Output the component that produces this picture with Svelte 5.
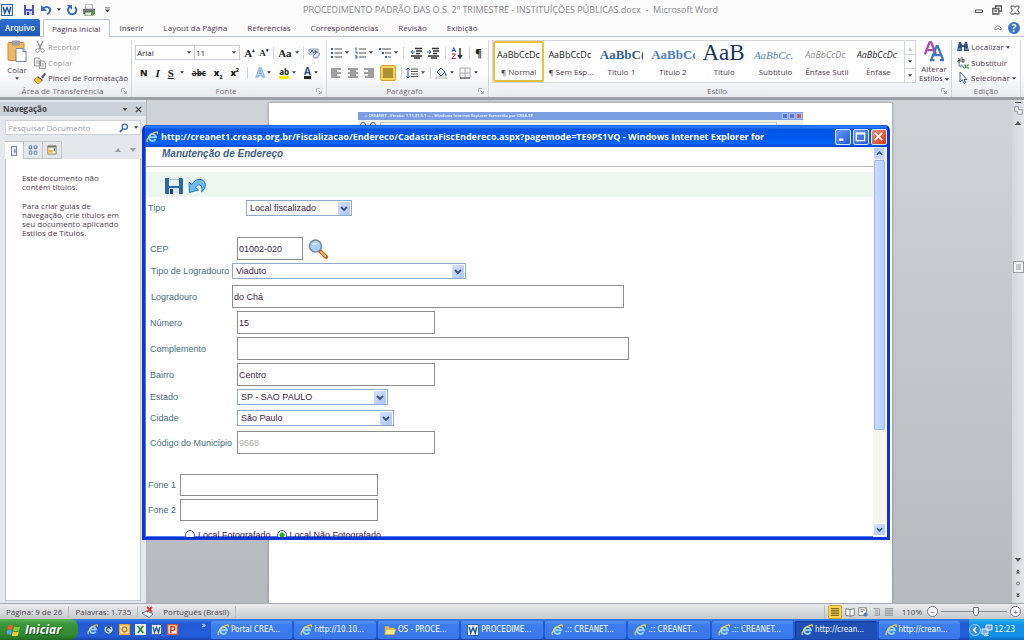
<script lang="ts">
	type Style = { name: string; sample: string; look: string };
	type Task = { icon: 'ie' | 'folder' | 'word'; text: string; active?: boolean };

	const tabs = [
		'Página Inicial',
		'Inserir',
		'Layout da Página',
		'Referências',
		'Correspondências',
		'Revisão',
		'Exibição'
	];
	let currentTab = $state('Página Inicial');

	const styles: Style[] = [
		{ name: '¶ Normal', sample: 'AaBbCcDc', look: 'plain' },
		{ name: '¶ Sem Esp...', sample: 'AaBbCcDc', look: 'plain' },
		{ name: 'Título 1', sample: 'AaBbC(', look: 'heading dark' },
		{ name: 'Título 2', sample: 'AaBbCc', look: 'heading' },
		{ name: 'Título', sample: 'AaB', look: 'title' },
		{ name: 'Subtítulo', sample: 'AaBbCc.', look: 'subtitle' },
		{ name: 'Ênfase Sutil', sample: 'AaBbCcDc', look: 'plain soft' },
		{ name: 'Ênfase', sample: 'AaBbCcDc', look: 'plain slanted' }
	];

	const tasks: Task[] = [
		{ icon: 'ie', text: 'Portal CREA...' },
		{ icon: 'ie', text: 'http://10.10...' },
		{ icon: 'folder', text: 'OS - PROCE...' },
		{ icon: 'word', text: 'PROCEDIME...' },
		{ icon: 'ie', text: '.:: CREANET...' },
		{ icon: 'ie', text: '.:: CREANET...' },
		{ icon: 'ie', text: '.:: CREANET...' },
		{ icon: 'ie', text: 'http://crean...', active: true },
		{ icon: 'ie', text: 'http://crean...' }
	];

	let address = $state({
		cep: '01002-020',
		street: 'do Chá',
		number: '15',
		extra: '',
		district: 'Centro',
		cityCode: '9668',
		phone1: '',
		phone2: ''
	});
	let photo = $state('nao');
</script>

{#snippet ie()}
	<svg class="ico" viewBox="0 0 16 16" aria-hidden="true">
		<path d="M12.6 11a4.600 4.600 0 1 1 .6-2.800H5.500" fill="none" stroke="#8fd4fb" stroke-width="2.600" />
		<path d="M2.200 14.800C-1 12 7 2 14.500 1.200c1.300.2 1 2 .3 3" fill="none" stroke="#f7cd3b" stroke-width="1.500" />
	</svg>
{/snippet}

{#snippet word()}
	<svg class="ico" viewBox="0 0 16 16" aria-hidden="true">
		<rect x=".7" y=".7" width="14.600" height="14.600" fill="#f2f7ff" stroke="#3467b2" stroke-width="1.400" />
		<path d="M3 4l2 8 3-7 3 7 2-8" fill="none" stroke="#2458ab" stroke-width="2" />
	</svg>
{/snippet}

{#snippet caret()}
	<svg class="caret" viewBox="0 0 5 3" aria-hidden="true"><path d="M0 0h5L2.500 3z" fill="currentColor" /></svg>
{/snippet}

{#snippet chevron()}
	<svg class="chev" viewBox="0 0 8 8" aria-hidden="true"><path d="M1 2.500l3 3 3-3" fill="none" stroke="#35507c" stroke-width="1.800" /></svg>
{/snippet}

{#snippet launcher()}
	<svg class="launcher" viewBox="0 0 6 6" aria-hidden="true"><path d="M.5 4V.5H4M2.500 2.500l3 3M5.500 3v2.500H3" fill="none" stroke="#a3a8af" stroke-width=".8" /></svg>
{/snippet}

{#snippet lines(kind: string)}
	<svg class="ico" viewBox="0 0 12 12" aria-hidden="true">
		{#if kind === 'left'}
			<path d="M1 2h10M1 4h6M1 6h10M1 8h6M1 10h9" stroke="#444" />
		{:else if kind === 'center'}
			<path d="M1 2h10M3 4h6M1 6h10M3 8h6M1 10h10" stroke="#444" />
		{:else if kind === 'right'}
			<path d="M1 2h10M5 4h6M1 6h10M5 8h6M2 10h9" stroke="#444" />
		{:else if kind === 'full'}
			<path d="M1 2h10M1 4h10M1 6h10M1 8h10M1 10h10" stroke="#5b4a10" />
		{:else if kind === 'bullets'}
			<path d="M4.500 2H12M4.500 6H12M4.500 10H12" stroke="#555" />
			<path d="M1 2h2M1 6h2M1 10h2" stroke="#2e5aa8" stroke-width="2" />
		{:else if kind === 'numbers'}
			<path d="M5 2h7M5 6h7M5 10h7" stroke="#555" />
			<path d="M2 .5v3M1 5h2v2M1 9h2v2H1" fill="none" stroke="#2e5aa8" />
		{:else if kind === 'levels'}
			<path d="M3 2h9M6 6h6M9 10h3" stroke="#555" />
			<path d="M0 2h2M3 6h2M6 10h2" stroke="#2e5aa8" stroke-width="2" />
		{:else if kind === 'outdent'}
			<path d="M5 1.500h7M6 4h6M6 6.500h4M1 9h11M4 11h6" stroke="#333" stroke-width="1.400" />
			<path d="M5 5H1M3 3L1 5l2 2" fill="none" stroke="#2e5aa8" />
		{:else if kind === 'indent'}
			<path d="M5 1.500h7M6 4h6M6 6.500h4M1 9h11M4 11h6" stroke="#333" stroke-width="1.400" />
			<path d="M0 5h4M2 3l2 2-2 2" fill="none" stroke="#2e5aa8" />
		{:else}
			<path d="M5 2h7M5 4.500h7M5 7h7M5 9.500h7" stroke="#555" />
			<path d="M2 1v10M.5 3L2 1l1.500 2M.5 9L2 11l1.500-2" fill="none" stroke="#2e5aa8" />
		{/if}
	</svg>
{/snippet}

<div class="desktop">
	<header class="titlebar">
		<div class="quick">
			{@render word()}
			<i class="sep"></i>
			<svg class="ico" viewBox="0 0 12 12" aria-hidden="true">
				<path d="M1 1h10v10H1z" fill="#5557b8" /><path d="M3 1h6v4H3z" fill="#eef" /><path d="M3 7h6v4H3z" fill="#c9cdf0" /><path d="M4 8h2v3H4z" fill="#33398e" />
			</svg>
			<svg class="ico" viewBox="0 0 12 12" aria-hidden="true">
				<path d="M3 4.500c4-3 8-1 7 2.500-.4 1.500-1.500 2.500-3 3.500" fill="none" stroke="#3b6cc4" stroke-width="2" /><path d="M1 1v6h6z" fill="#3b6cc4" />
			</svg>
			{@render caret()}
			<svg class="ico" viewBox="0 0 12 12" aria-hidden="true">
				<path d="M4 2.500A4.200 4.200 0 1 0 9 3" fill="none" stroke="#3b6cc4" stroke-width="2" /><path d="M1 1h5v5z" fill="#3b6cc4" />
			</svg>
			<svg class="ico" viewBox="0 0 12 12" aria-hidden="true">
				<path d="M3 0h6l1 5H2z" fill="#fff" stroke="#777" stroke-width=".7" /><path d="M0 5h12v5H0z" fill="#73777b" /><path d="M2 8h8v4H2z" fill="#dfe8d8" stroke="#555" stroke-width=".7" /><path d="M8 8l3-2v5H8z" fill="#5aa33a" />
			</svg>
			<i class="sep"></i>
			<svg class="custom" viewBox="0 0 6 6" aria-hidden="true"><path d="M0 0h6v1H0zM0 2.500h6L3 6z" fill="#444" /></svg>
		</div>
		<h1>PROCEDIMENTO PADRÃO DAS O.S. 2º TRIMESTRE - INSTITUÍÇÕES PÚBLICAS.docx&nbsp; -&nbsp; Microsoft Word</h1>
		<div class="win-buttons">
			<button type="button" aria-label="Minimizar">
				<svg viewBox="0 0 10 10"><path d="M1.500 5h7v2.500h-7z" fill="#fff" stroke="#555" /></svg>
			</button>
			<button type="button" aria-label="Restaurar">
				<svg viewBox="0 0 10 10"><path d="M3.500 3V1h6v5h-2M.8 3.500h6v5.500h-6zM2.500 6h2.500" fill="none" stroke="#555" stroke-width="1.300" /></svg>
			</button>
			<button type="button" aria-label="Fechar">
				<svg viewBox="0 0 10 10"><path d="M1 1h3l1 1.500L6 1h3v2L7.500 5 9 7v2H6L5 7.500 4 9H1V7l1.500-2L1 3z" fill="#fff" stroke="#555" /></svg>
			</button>
		</div>
	</header>

	<nav class="tabs">
		<button class="file" type="button">Arquivo</button>
		{#each tabs as tab}
			<button class:current={currentTab === tab} type="button" onclick={() => (currentTab = tab)}>{tab}</button>
		{/each}
		<span class="help">
			<svg viewBox="0 0 8 8" aria-hidden="true"><path d="M1 4l3-2.500L7 4v2L4 4.500 1 6z" fill="#fff" stroke="#666" stroke-width=".8" /></svg>
			<button type="button" aria-label="Ajuda">?</button>
		</span>
	</nav>

	<section class="ribbon">
		<div class="group clipboard">
			<div class="body">
				<button class="big" type="button">
					<svg viewBox="0 0 20 22" aria-hidden="true">
						<rect x="1" y="2" width="16" height="18" rx="1" fill="#efb75b" stroke="#c98c33" /><rect x="5" y="0" width="8" height="5" rx="1" fill="#9b9ea3" /><path d="M9 8h7l3 3v10H9z" fill="#fff" stroke="#6f86a8" /><path d="M16 8v3h3" fill="#d7e3f3" stroke="#6f86a8" />
					</svg>
					<span>Colar</span>
					{@render caret()}
				</button>
				<div class="side">
					<button class="off" type="button">
						<svg class="ico" viewBox="0 0 12 12" aria-hidden="true"><path d="M3 0l4 8M9 0L5 8" stroke="#999" stroke-width="1.500" /><circle cx="3.500" cy="9.500" r="1.800" fill="none" stroke="#999" /><circle cx="8.500" cy="9.500" r="1.800" fill="none" stroke="#999" /></svg>
						Recortar
					</button>
					<button class="off" type="button">
						<svg class="ico" viewBox="0 0 12 12" aria-hidden="true"><path d="M.5 1h4l2 2v6h-6zM5.500 4h4l2 2v5.500h-6z" fill="#f4f4f4" stroke="#999" /><path d="M7 7h3M7 9h3M2 4h3M2 6h3" stroke="#aaa" /></svg>
						Copiar
					</button>
					<button type="button">
						<svg class="ico" viewBox="0 0 12 12" aria-hidden="true"><path d="M7 5l3.500-4.500L12 2 9 6.500z" fill="#6a5a9a" /><path d="M4 4l5 4-1 1-5-4z" fill="#666" /><path d="M0 8l3-3 5 4-4 3z" fill="#f0c040" stroke="#a67c1c" stroke-width=".6" /></svg>
						Pincel de Formatação
					</button>
				</div>
			</div>
			<footer><span>Área de Transferência</span>{@render launcher()}</footer>
		</div>

		<div class="group font">
			<div class="body rows">
				<div class="tools">
					<div class="combos">
						<label class="combo face"><input aria-label="Fonte" value="Arial" />{@render caret()}</label>
						<label class="combo size"><input aria-label="Tamanho" value="11" />{@render caret()}</label>
					</div>
					<b class="serif">A<sup>▴</sup></b>
					<b class="serif small">A<sup>▾</sup></b>
					<i class="sep"></i>
					<span class="pair"><b class="serif">Aa</b>{@render caret()}</span>
					<i class="sep"></i>
					<svg class="ico" viewBox="0 0 12 12" aria-hidden="true"><path d="M1 2h9v5H1z" fill="#e3e9f5" stroke="#5875ae" stroke-width=".7" /><path d="M2.500 6l1.500-3 1.500 3M7 3v3h1.500V4.500H7" fill="none" stroke="#333" stroke-width=".8" /><path d="M5 9l4-4 3 2-3 4H6z" fill="#dfe4fa" stroke="#6474b0" stroke-width=".8" /></svg>
				</div>
				<div class="tools">
					<b class="mark">N</b>
					<b class="serif"><em>I</em></b>
					<span class="pair wide"><b class="serif under">S</b>{@render caret()}</span>
					<s class="abc">abc</s>
					<b class="mark">x<sub>2</sub></b>
					<b class="mark">x<sup>2</sup></b>
					<i class="sep"></i>
					<span class="pair"><b class="glow">A</b>{@render caret()}</span>
					<span class="pair"><span class="hilite">ab</span>{@render caret()}</span>
					<span class="pair"><b class="ink">A</b>{@render caret()}</span>
				</div>
			</div>
			<footer><span>Fonte</span>{@render launcher()}</footer>
		</div>

		<div class="group paragraph">
			<div class="body rows">
				<div class="tools">
					<span class="pair">{@render lines('bullets')}{@render caret()}</span>
					<span class="pair">{@render lines('numbers')}{@render caret()}</span>
					<span class="pair">{@render lines('levels')}{@render caret()}</span>
					<i class="sep"></i>
					{@render lines('outdent')}
					{@render lines('indent')}
					<i class="sep"></i>
					<svg class="ico" viewBox="0 0 12 12" aria-hidden="true"><path d="M1 5l1.800-4.500L4.600 5M1.600 3.500h2.500" fill="none" stroke="#2e5aa8" /><path d="M1 7h3.500L1 11.500h3.800" fill="none" stroke="#a03040" /><path d="M9 1v9M7 8l2 3 2-3" fill="none" stroke="#333" stroke-width="1.500" /></svg>
					<i class="sep"></i>
					<b class="pilcrow">¶</b>
				</div>
				<div class="tools">
					{@render lines('left')}
					{@render lines('center')}
					{@render lines('right')}
					<button class="pressed" type="button" aria-label="Justificar">{@render lines('full')}</button>
					<i class="sep"></i>
					<span class="pair">{@render lines('spacing')}{@render caret()}</span>
					<i class="sep"></i>
					<span class="pair">
						<svg class="ico" viewBox="0 0 12 12" aria-hidden="true"><path d="M2 5l4-4 4 4-4 4z" fill="#eaf1fb" stroke="#456" /><path d="M10 5c2 2 2 4 1 4s-1-1-1-4z" fill="#3a74c8" /><path d="M1 10h10v2H1z" fill="#fff" stroke="#888" stroke-width=".6" /></svg>
						{@render caret()}
					</span>
					<span class="pair">
						<svg class="ico" viewBox="0 0 12 12" aria-hidden="true"><path d="M1 1h10v10H1zM6 1v10M1 6h10" fill="none" stroke="#aaa" /><path d="M1 11h10" stroke="#444" /></svg>
						{@render caret()}
					</span>
				</div>
			</div>
			<footer><span>Parágrafo</span>{@render launcher()}</footer>
		</div>

		<div class="group estilo">
			<div class="body">
				<div class="gallery">
					{#each styles as style, i}
						<button class="style" class:chosen={i === 0} type="button">
							<span class="sample {style.look}">{style.sample}</span>
							<span class="name">{style.name}</span>
						</button>
					{/each}
					<div class="steps">
						<span class="faint">▴</span>
						<span>{@render caret()}</span>
						<span>{@render caret()}</span>
					</div>
				</div>
				<button class="big change" type="button">
					<svg viewBox="0 0 22 22" aria-hidden="true">
						<path d="M1 14L6 1h2l5 13M3.500 9.500h7" fill="none" stroke="#a94aa0" stroke-width="2.500" /><path d="M8 20l6-15h1l6 15M10.500 15h8M6.500 20.500h5M17.500 20.500H22" fill="none" stroke="#3d78c4" stroke-width="2.500" />
					</svg>
					<span>Alterar<br />Estilos {@render caret()}</span>
				</button>
			</div>
			<footer><span>Estilo</span>{@render launcher()}</footer>
		</div>

		<div class="group editing">
			<div class="side">
				<button type="button">
					<svg class="ico" viewBox="0 0 12 12" aria-hidden="true"><path d="M2 1h2l1 3h2l1-3h2l2 9H7V6H5v4H0z" fill="#2f4f8f" /><path d="M1 8h3M8 8h3" stroke="#9db7e4" /></svg>
					Localizar {@render caret()}
				</button>
				<button type="button">
					<svg class="ico" viewBox="0 0 12 12" aria-hidden="true"><path d="M1 2h2v3H1V3.500h2M5 0v5h2V2.500H5" fill="none" stroke="#444" /><path d="M7 8h1.500v3H6.500V9.500M12 8h-2v3h2" fill="none" stroke="#3a8a3a" /><path d="M2 6v3h3M4 7.500L5.500 9 4 10.500" fill="none" stroke="#4a77c4" /></svg>
					Substituir
				</button>
				<button type="button">
					<svg class="ico" viewBox="0 0 12 12" aria-hidden="true"><path d="M3 0v10l2.500-2L7 11.500l1.500-.7L7 7.500h3z" fill="#fff" stroke="#44618f" /></svg>
					Selecionar {@render caret()}
				</button>
			</div>
			<footer><span>Edição</span></footer>
		</div>
	</section>

	<main class="workspace">
		<aside class="navigator">
			<h2>Navegação <span>{@render caret()}<svg class="x" viewBox="0 0 8 8" aria-hidden="true"><path d="M1 1l6 6M7 1L1 7" stroke="#444" stroke-width="1.500" /></svg></span></h2>
			<label class="search">
				<input placeholder="Pesquisar Documento" aria-label="Pesquisar Documento" />
				<svg class="ico" viewBox="0 0 12 12" aria-hidden="true"><circle cx="7" cy="4.500" r="3.200" fill="#eef5ff" stroke="#3a6fc0" stroke-width="1.500" /><path d="M4.500 7L1 11" stroke="#3a6fc0" stroke-width="2" /></svg>
				{@render caret()}
			</label>
			<div class="views">
				<button class="on" type="button" aria-label="Títulos">
					<svg class="ico" viewBox="0 0 12 12" aria-hidden="true"><rect x="3" y=".5" width="6" height="11" fill="#e8edf5" stroke="#5d7699" /><path d="M7 4v4" stroke="#5d7699" stroke-width="1.500" /></svg>
				</button>
				<button type="button" aria-label="Páginas">
					<svg class="ico" viewBox="0 0 12 12" aria-hidden="true"><path d="M1.500 1h3v3.500h-3zM7.500 1h3v3.500h-3zM1.500 7.500h3V11h-3zM7.500 7.500h3V11h-3z" fill="#fff" stroke="#466fa8" /></svg>
				</button>
				<button type="button" aria-label="Resultados">
					<svg class="ico" viewBox="0 0 12 12" aria-hidden="true"><path d="M1 1h10v10H1z" fill="#fbf0bf" stroke="#777" /><path d="M1 2h10" stroke="#777" stroke-width="2" /><path d="M2 6h5v3H2z" fill="#efb82f" /><path d="M8 4h2v3H8z" fill="#4a77c4" /></svg>
				</button>
				<span class="arrows"><i class="up"></i><i class="down"></i></span>
			</div>
			<div class="hint">
				<p>Este documento não<br />contém títulos.</p>
				<p>Para criar guias de<br />navegação, crie títulos em<br />seu documento aplicando<br />Estilos de Títulos.</p>
			</div>
		</aside>

		<div class="canvas">
			<div class="page">
				<div class="shot">
					<div class="shot-title">
						<span>.:: CREANET - Versão: 1.11.21.5.1 ::. - Windows Internet Explorer fornecido por CREA-SP</span>
						<span class="shot-buttons"><i></i><i></i><i class="red"></i></span>
					</div>
					<div class="shot-bar"><i></i><i></i><span></span></div>
				</div>
			</div>
		</div>

		<div class="doc-scroll" aria-hidden="true">
			<i class="dash"></i>
			<svg class="ico" viewBox="0 0 12 12"><path d="M1 1h5v4h5v6H5V7H1z" fill="#f4f5f7" stroke="#777" /></svg>
			<i class="up"></i>
			<span class="thumb"></span>
			<span class="ends">
				<i class="down"></i>
				<svg viewBox="0 0 6 6"><path d="M0 3l3-3 3 3zM0 6l3-3 3 3z" fill="#444" /></svg>
				<svg viewBox="0 0 6 6"><circle cx="3" cy="3" r="2.300" fill="none" stroke="#555" /></svg>
				<svg viewBox="0 0 6 6"><path d="M0 0h6L3 3zM0 3h6L3 6z" fill="#444" /></svg>
			</span>
		</div>
	</main>

	<div class="statusbar">
		<span>Página: 9 de 26</span>
		<span>Palavras: 1.735</span>
		<span class="lang">
			<svg class="ico" viewBox="0 0 12 12" aria-hidden="true"><path d="M0 7l5-2 6 3-4 3.500z" fill="#fff" stroke="#5875ae" /><path d="M5 1l5 5M10 1L5 6" stroke="#d03a30" stroke-width="1.800" /></svg>
			Português (Brasil)
		</span>
		<div class="zoom">
			<button class="layout-on" type="button" aria-label="Layout de impressão">{@render lines('full')}</button>
			<svg class="ico" viewBox="0 0 12 12" aria-hidden="true"><path d="M1 2l5 1 5-1v8l-5 1-5-1zM6 3v8" fill="#fff" stroke="#666" /></svg>
			<svg class="ico" viewBox="0 0 12 12" aria-hidden="true"><path d="M1 1h9v9H1zM3 3.500h5M3 5.500h3" fill="#fff" stroke="#666" /><circle cx="9" cy="9" r="2.500" fill="#5580b8" /></svg>
			<svg class="ico" viewBox="0 0 12 12" aria-hidden="true"><path d="M3 2h7v8H4M5 4h3M5 6h3M5 8h3" fill="none" stroke="#888" /></svg>
			<svg class="ico" viewBox="0 0 12 12" aria-hidden="true"><path d="M1 2h10M1 4h10M1 6h10M1 8h10M1 10h10" stroke="#888" /></svg>
			<span class="pct">110%</span>
			<button class="round" type="button" aria-label="Reduzir">−</button>
			<input type="range" min="10" max="200" value="110" aria-label="Zoom" />
			<button class="round" type="button" aria-label="Ampliar">+</button>
		</div>
	</div>

	<footer class="taskbar">
		<button class="start" type="button">
			<svg viewBox="0 0 14 14" aria-hidden="true"><path d="M1 3c2-1.500 3.500-1 5 0L5 7C3.500 6 2 6 0 7z" fill="#ee5a2c" /><path d="M7 3.500c2 1 3.500 1 6 0l-1 4c-2 1-4 1-6 0z" fill="#7fd03c" /><path d="M0 8c2-1.500 3.500-1 5 0l-1 4c-1.500-1-3-1-5 0z" fill="#5a9bf5" /><path d="M5.800 8.500c2 1 3.700 1 6 0l-1 4c-2 1-4 1-6 0z" fill="#fbcb2e" /></svg>
			Iniciar
		</button>
		<div class="launch">
			{@render ie()}
			<svg class="ico" viewBox="0 0 16 16" aria-hidden="true"><circle cx="8" cy="8" r="6.500" fill="#cfe3fb" stroke="#16407f" /><path d="M11 8a3 3 0 1 0-2 2.800M4 3h8" fill="none" stroke="#1d4f96" stroke-width="2" /></svg>
			<svg class="ico" viewBox="0 0 16 16" aria-hidden="true"><rect width="16" height="16" fill="#f4a51f" /><rect x="2" y="2" width="12" height="12" fill="#fde9b4" /><circle cx="8" cy="8" r="3.500" fill="none" stroke="#c87410" stroke-width="2" /></svg>
			<svg class="ico" viewBox="0 0 16 16" aria-hidden="true"><rect width="16" height="16" fill="#e9f5e4" /><path d="M4 3l8 10M12 3L4 13" stroke="#2f7d38" stroke-width="2.500" /></svg>
			{@render word()}
			<svg class="ico" viewBox="0 0 16 16" aria-hidden="true"><rect width="16" height="16" fill="#e2562b" /><rect x="2" y="2" width="12" height="12" fill="#ffe9df" /><path d="M5.500 13V4h3.500a2.400 2.400 0 0 1 0 5H6" fill="none" stroke="#cf3b17" stroke-width="2" /></svg>
			<span class="more">»</span>
		</div>
		<div class="tasks">
			{#each tasks as task}
				<button class="task" class:active={task.active} type="button">
					{#if task.icon === 'ie'}
						{@render ie()}
					{:else if task.icon === 'word'}
						{@render word()}
					{:else}
						<svg class="ico" viewBox="0 0 16 16" aria-hidden="true"><path d="M1 3h5l1.500 2H14v9H1z" fill="#e9b93c" /><path d="M3 7h13l-2.500 7H1z" fill="#fde88c" stroke="#c89722" stroke-width=".7" /></svg>
					{/if}
					<span>{task.text}</span>
				</button>
			{/each}
		</div>
		<div class="tray">
			<svg class="ico" viewBox="0 0 12 12" aria-hidden="true"><circle cx="6" cy="6" r="5.500" fill="#2f8bea" stroke="#9fd2fb" /><path d="M7.500 3l-3 3 3 3" fill="none" stroke="#fff" stroke-width="1.600" /></svg>
			<svg class="ico" viewBox="0 0 12 12" aria-hidden="true"><path d="M5 1h6v5H5zM1 5h6v5H1z" fill="#7aa6e6" stroke="#e6f0fb" /><path d="M3 11.500h5" stroke="#dfe6ee" /></svg>
			<time>12:23</time>
		</div>
	</footer>

	<div class="dialog" role="dialog" aria-labelledby="dialog-title">
		<div class="dialog-title">
			{@render ie()}
			<strong id="dialog-title">http://creanet1.creasp.org.br/Fiscalizacao/Endereco/CadastraFiscEndereco.aspx?pagemode=TE9PS1VQ - Windows Internet Explorer for</strong>
			<button type="button" aria-label="Minimizar"><svg viewBox="0 0 12 12"><path d="M2 9.500h5" stroke="#fff" stroke-width="2.500" /></svg></button>
			<button type="button" aria-label="Maximizar"><svg viewBox="0 0 12 12"><path d="M1.500 3h9M1.500 2v8.500h9V2z" fill="none" stroke="#fff" stroke-width="1.500" /></svg></button>
			<button class="close" type="button" aria-label="Fechar"><svg viewBox="0 0 12 12"><path d="M2 2l8 8M10 2l-8 8" stroke="#fff" stroke-width="1.800" /></svg></button>
		</div>
		<div class="dialog-body">
			<form>
				<h3>Manutenção de Endereço</h3>
				<div class="actions">
					<button type="button" aria-label="Salvar">
						<svg viewBox="0 0 18 18"><path d="M0 1h17l1 1v15H1l-1-1z" fill="#2b69a8" /><path d="M4 1h10v8H4z" fill="#e9eef4" /><path d="M4 2h10v1H4z" fill="#b9c6d4" /><path d="M4 11h10v6H4z" fill="#dfe5ec" /><path d="M5 12h3v5H5z" fill="#1d3d66" /></svg>
					</button>
					<button type="button" aria-label="Voltar">
						<svg viewBox="0 0 18 18"><path d="M1 5.500l3 2C6 1.500 16.500 0 17.300 7.500c.2 3-1.300 5.500-3.800 7.500 1-3.500.5-7.500-3-7-1.500.3-2.500 1.500-3 2.500l3 2.500-9 2.500z" fill="#6cbcf0" stroke="#2273b5" /></svg>
					</button>
				</div>
				<div class="fields">
					<div class="row kind">
						<label for="tipo">Tipo</label>
						<span class="select"><select id="tipo"><option>Local fiscalizado</option></select>{@render chevron()}</span>
					</div>
					<div class="row zip">
						<label for="cep">CEP</label>
						<input id="cep" bind:value={address.cep} />
						<button type="button" aria-label="Buscar CEP">
							<svg viewBox="0 0 20 20"><path d="M12 12l6 6" stroke="#a8641c" stroke-width="4" stroke-linecap="round" /><path d="M13 13l4.500 4.500" stroke="#f5b860" stroke-width="2" stroke-linecap="round" /><circle cx="7.500" cy="7" r="6" fill="#a8d2f5" stroke="#7186a0" stroke-width="1.500" /><path d="M4 6c1-3 4-3 6-2-1 2-4 1-6 2z" fill="#e8f5ff" /></svg>
						</button>
					</div>
					<div class="row near road">
						<label for="tipo-log">Tipo de Logradouro</label>
						<span class="select"><select id="tipo-log"><option>Viaduto</option></select>{@render chevron()}</span>
					</div>
					<div class="row near">
						<label for="log">Logradouro</label>
						<input id="log" class="long" bind:value={address.street} />
					</div>
					<div class="row">
						<label for="num">Número</label>
						<input id="num" bind:value={address.number} />
					</div>
					<div class="row">
						<label for="compl">Complemento</label>
						<input id="compl" class="long" bind:value={address.extra} />
					</div>
					<div class="row">
						<label for="bairro">Bairro</label>
						<input id="bairro" bind:value={address.district} />
					</div>
					<div class="row state">
						<label for="estado">Estado</label>
						<span class="select"><select id="estado"><option>SP - SAO PAULO</option></select>{@render chevron()}</span>
					</div>
					<div class="row city">
						<label for="cidade">Cidade</label>
						<span class="select"><select id="cidade"><option>São Paulo</option></select>{@render chevron()}</span>
					</div>
					<div class="row">
						<label for="cod">Código do Município</label>
						<input id="cod" value={address.cityCode} disabled />
					</div>
					<div class="row phone first">
						<label for="fone1">Fone 1</label>
						<input id="fone1" bind:value={address.phone1} />
					</div>
					<div class="row phone">
						<label for="fone2">Fone 2</label>
						<input id="fone2" bind:value={address.phone2} />
					</div>
					<div class="photo">
						<label><input type="radio" name="foto" value="sim" bind:group={photo} />Local Fotografado</label>
						<label><input type="radio" name="foto" value="nao" bind:group={photo} />Local Não Fotografado</label>
					</div>
				</div>
			</form>
			<div class="bar" aria-hidden="true">
				<span class="end flip">{@render chevron()}</span>
				<span class="grip"></span>
				<span class="end">{@render chevron()}</span>
			</div>
		</div>
	</div>
</div>

<style>
	:global(body) {
		margin: 0;
		overflow: hidden;
	}

	.desktop,
	.desktop :global(*) {
		box-sizing: border-box;
	}

	.desktop {
		position: relative;
		display: flex;
		flex-direction: column;
		height: 100vh;
		overflow: hidden;
		background: #fbfbfc;
		font-family: 'Open Sans', 'Noto Sans', sans-serif;
		font-size: 8px;
		line-height: 10px;
		color: #51404f;
	}

	button,
	input,
	select {
		font: inherit;
		color: inherit;
	}

	button {
		padding: 0;
		border: 0;
		background: none;
		white-space: nowrap;
	}

	svg {
		display: block;
		flex: none;
	}

	.ico {
		width: 12px;
		height: 12px;
	}

	.caret {
		width: 4px;
		height: 3px;
		color: #444;
	}

	.sep {
		width: 1px;
		height: 12px;
		background: #d0d4d9;
	}

	/* title and tabs */

	.titlebar {
		display: flex;
		align-items: center;
		height: 19px;
		padding: 0 4px 0 1px;
	}

	.quick,
	.win-buttons {
		display: flex;
		flex: none;
		align-items: center;
		width: 102px;
	}

	.quick {
		gap: 5px;
	}

	.custom {
		width: 5px;
		height: 6px;
	}

	.win-buttons {
		justify-content: flex-end;
		gap: 8px;
	}

	.win-buttons svg {
		width: 10px;
		height: 10px;
	}

	h1 {
		flex: 1;
		margin: 0;
		font-size: 9px;
		font-weight: 400;
		text-align: center;
		white-space: nowrap;
		color: #8c8c8c;
	}

	.tabs {
		display: flex;
		align-items: stretch;
		height: 18px;
		border-bottom: 1px solid #bfc4ca;
		padding-right: 4px;
	}

	.tabs > button {
		padding: 0 10px;
	}

	.tabs > .file {
		width: 40px;
		margin-right: 3px;
		padding: 0;
		border-radius: 2px 2px 0 0;
		background: linear-gradient(#2f6fd0, #1d58b8);
		color: #fff;
		font-weight: 600;
	}

	.tabs > .current {
		margin-bottom: -1px;
		padding: 0 8px;
		border: 1px solid #bfc4ca;
		border-bottom: 0;
		border-radius: 2px 2px 0 0;
		background: #fdfdfe;
	}

	.help {
		display: flex;
		align-items: center;
		gap: 6px;
		margin-left: auto;
	}

	.help svg {
		width: 8px;
		height: 8px;
	}

	.help button {
		width: 12px;
		height: 12px;
		border-radius: 50%;
		background: #3a76cf;
		color: #fff;
		font-weight: 700;
		font-size: 10px;
	}

	/* ribbon */

	.ribbon {
		display: flex;
		flex: none;
		height: 63px;
		padding: 3px 3px 0 0;
		border-bottom: 3px solid #9b9fa6;
		background: linear-gradient(#fdfdfe 60%, #e9ebef);
	}

	.group {
		display: flex;
		flex: none;
		flex-direction: column;
		border-right: 1px solid #d3d6db;
	}

	.clipboard {
		width: 132px;
	}

	.font {
		width: 195px;
	}

	.paragraph {
		width: 162px;
	}

	.estilo {
		flex: 1;
		min-width: 0;
	}

	.editing {
		width: 69px;
	}

	.body {
		display: flex;
		flex: 1;
		min-height: 0;
	}

	.rows {
		flex-direction: column;
		gap: 3px;
		padding: 4px 4px 0 3px;
	}

	.tools {
		display: flex;
		align-items: center;
		justify-content: space-between;
		height: 17px;
		padding-right: 2px;
		color: #222;
	}

	.font .tools + .tools {
		padding: 0 4px 0 5px;
	}

	.paragraph .tools + .tools {
		padding-right: 6px;
	}

	.pair {
		display: flex;
		align-items: center;
		gap: 3px;
	}

	.wide {
		gap: 6px;
	}

	.group footer {
		display: flex;
		align-items: center;
		height: 12px;
		padding: 0 4px;
		color: #77727a;
	}

	.group footer span {
		flex: 1;
		text-align: center;
	}

	.launcher {
		width: 6px;
		height: 6px;
	}

	.big {
		display: flex;
		flex-direction: column;
		align-items: center;
		width: 34px;
	}

	.big > svg:first-child {
		width: 20px;
		height: 23px;
	}

	.big .caret {
		margin-top: 2px;
	}

	.clipboard .big > span {
		margin-top: 2px;
	}

	.side {
		display: flex;
		flex: 1;
		flex-direction: column;
		justify-content: space-between;
	}

	.side button {
		display: flex;
		align-items: center;
		gap: 2px;
		height: 14px;
	}

	.side .off {
		color: #a5a1a6;
	}

	.editing .side {
		flex: 1;
		padding-left: 5px;
	}

	.combos {
		display: flex;
	}

	.combo {
		display: flex;
		align-items: center;
		height: 15px;
		padding-right: 3px;
		border: 1px solid #c9cdd3;
		background: #fff;
	}

	.combo input {
		flex: 1;
		min-width: 0;
		padding: 0 0 0 1px;
		border: 0;
		outline: 0;
		background: none;
	}

	.face {
		width: 60px;
	}

	.size {
		width: 45px;
		border-left: 0;
	}

	.serif {
		font-family: 'Liberation Serif', serif;
		font-size: 11px;
	}

	.small {
		font-size: 9px;
	}

	sup,
	sub {
		font-size: 5px;
		line-height: 0;
	}

	.mark {
		font-weight: 800;
		font-size: 9px;
	}

	.pilcrow {
		font-size: 10px;
	}

	.under {
		text-decoration: underline;
	}

	.abc {
		font-weight: 700;
	}

	.glow {
		font-size: 12px;
		color: #e9f4fd;
		-webkit-text-stroke: 1px #7bb0e0;
	}

	.hilite {
		border-bottom: 3px solid #ffee00;
		line-height: 9px;
		font-weight: 700;
	}

	.ink {
		border-bottom: 3px solid #222;
		font-size: 10px;
		line-height: 9px;
		color: #2c4a86;
	}

	.pressed,
	.layout-on {
		padding: 1px;
		border: 1px solid #d9a520;
		border-radius: 2px;
		background: #fbd65f;
	}

	.estilo .body {
		padding-left: 3px;
		gap: 1px;
	}

	.gallery {
		display: flex;
		flex: 1;
		min-width: 0;
		height: 43px;
		border: 1px solid #d3d6db;
		background: #fff;
	}

	.style {
		display: flex;
		flex: 1;
		flex-direction: column;
		justify-content: flex-end;
		min-width: 0;
		padding: 0 2px 3px;
		border: 2px solid transparent;
	}

	.chosen {
		border-color: #f0c040;
		border-radius: 2px;
	}

	.sample {
		width: 100%;
		height: 24px;
		overflow: hidden;
		font-size: 9px;
		line-height: 24px;
		text-align: left;
		color: #222;
	}

	.soft {
		font-style: italic;
		color: #888;
	}

	.slanted {
		font-style: italic;
	}

	.heading {
		font-family: 'Liberation Serif', serif;
		font-size: 13px;
		font-weight: 700;
		color: #4f81bd;
	}

	.dark {
		color: #365f91;
	}

	.title {
		font-family: 'Liberation Serif', serif;
		font-size: 23px;
		line-height: 20px;
		color: #17365d;
	}

	.subtitle {
		font-family: 'Liberation Serif', serif;
		font-size: 11px;
		font-style: italic;
		color: #4f81bd;
	}

	.name {
		width: 100%;
		text-align: center;
	}

	.steps {
		display: flex;
		flex-direction: column;
		width: 11px;
		border-left: 1px solid #d3d6db;
	}

	.steps span {
		display: grid;
		flex: 1;
		place-items: center;
	}

	.steps span + span {
		border-top: 1px solid #d3d6db;
	}

	.steps .faint {
		color: #ccc;
	}

	.change span {
		margin-top: 1px;
		line-height: 9px;
	}

	.change span .caret {
		display: inline-block;
	}

	/* workspace */

	.workspace {
		display: flex;
		flex: 1;
		min-height: 0;
		background: linear-gradient(#d0d3d7, #b6babf);
	}

	.navigator {
		display: flex;
		flex-direction: column;
		width: 147px;
		padding: 2px 5px;
		border-right: 1px solid #b3b8be;
		background: #e4e7eb;
	}

	.navigator h2 {
		display: flex;
		align-items: center;
		justify-content: space-between;
		height: 14px;
		margin: 0 -5px;
		padding: 0 4px 0 3px;
		background: #ccd2d9;
		font-size: 8px;
		color: #444;
	}

	.navigator h2 span {
		display: flex;
		align-items: center;
		gap: 7px;
	}

	.navigator h2 .caret {
		width: 6px;
	}

	.x {
		width: 7px;
		height: 7px;
	}

	.search {
		display: flex;
		align-items: center;
		gap: 5px;
		height: 15px;
		margin-top: 4px;
		padding: 0 2px;
		border: 1px solid #cdd1d6;
		background: #fff;
	}

	.search .ico {
		width: 10px;
		height: 10px;
	}

	.search input {
		flex: 1;
		min-width: 0;
		padding: 0;
		border: 0;
		outline: 0;
	}

	.search input::placeholder {
		color: #a0a0a5;
		opacity: 1;
	}

	.views {
		display: flex;
		height: 18px;
		margin-top: 6px;
	}

	.views button {
		display: grid;
		place-items: center;
		width: 19px;
		border: 1px solid #c0c5cb;
		border-left: 0;
	}

	.views .ico {
		width: 10px;
		height: 10px;
	}

	.views .on {
		border-bottom: 0;
		background: #fff;
	}

	.arrows {
		display: flex;
		gap: 9px;
		align-items: center;
		margin-left: auto;
		padding-right: 5px;
		opacity: 0.5;
	}

	.up,
	.down {
		width: 0;
		height: 0;
		border: 3px solid transparent;
		border-top-width: 0;
		border-bottom: 4px solid #555;
	}

	.down {
		border-bottom: 0;
		border-top: 4px solid #555;
	}

	.hint {
		flex: 1;
		padding: 14px 16px;
		border: 1px solid #c0c5cb;
		border-top: 0;
		background: #fff;
		line-height: 9px;
	}

	.hint p {
		margin: 0 0 10px;
		white-space: nowrap;
	}

	.canvas {
		flex: 1;
		min-width: 0;
		padding: 3px 120px 0 122px;
	}

	.page {
		height: 100%;
		padding: 9px 89px;
		background: #fff;
		box-shadow: 0 0 3px #7c8087;
	}

	.shot-title {
		display: flex;
		align-items: center;
		justify-content: space-between;
		height: 8px;
		padding: 0 1px 0 6px;
		background: #7d9fe2;
		font-size: 4px;
		line-height: 8px;
		font-weight: 700;
		color: #dfe9fb;
	}

	.shot-buttons {
		display: flex;
		gap: 1px;
	}

	.shot-buttons i {
		width: 6px;
		height: 6px;
		border: 1px solid #a9bff0;
		background: #5479cf;
	}

	.shot-buttons .red {
		background: #c25f70;
	}

	.shot-bar {
		display: flex;
		gap: 4px;
		height: 8px;
		padding: 2px;
		background: #f0efe6;
	}

	.shot-bar i {
		width: 6px;
		height: 6px;
		border: 1px solid #557;
		border-radius: 50%;
	}

	.shot-bar span {
		flex: 1;
		margin-right: 24px;
		border: 1px solid #c5cbd5;
		background: #fff;
	}

	.doc-scroll {
		display: flex;
		flex-direction: column;
		align-items: center;
		width: 12px;
		padding: 2px 0 5px;
		background: linear-gradient(90deg, #d3d7dc, #e3e6ea);
	}

	.dash {
		width: 6px;
		height: 1px;
		margin-bottom: 3px;
		background: #444;
	}

	.doc-scroll .ico {
		width: 9px;
		height: 9px;
		margin-bottom: 6px;
	}

	.thumb {
		width: 11px;
		height: 12px;
		margin-top: 136px;
		border: 1px solid #9aa0a7;
		background: #c4c8cd;
		box-shadow: inset 0 0 0 2px #f4f5f7;
	}

	.ends {
		display: flex;
		flex-direction: column;
		align-items: center;
		gap: 7px;
		margin-top: auto;
	}

	.ends svg {
		width: 4px;
		height: 5px;
	}

	/* status bar */

	.statusbar {
		display: flex;
		flex: none;
		align-items: center;
		height: 16px;
		border-top: 1px solid #a5a9af;
		background: linear-gradient(#ececee, #c6c9cd);
		color: #4c4650;
		white-space: nowrap;
	}

	.statusbar > span {
		padding: 0 6px;
		border-right: 1px solid #b7bbc0;
	}

	.statusbar .lang {
		display: flex;
		align-items: center;
		gap: 9px;
		padding-left: 4px;
	}

	.zoom {
		display: flex;
		align-items: center;
		gap: 3px;
		margin-left: auto;
		padding: 0 3px;
		border-left: 1px solid #b7bbc0;
	}

	.zoom .ico {
		width: 10px;
		height: 10px;
	}

	.pct {
		margin: 0 2px 0 5px;
	}

	.round {
		width: 11px;
		height: 11px;
		border: 1px solid #6d727a;
		border-radius: 50%;
		background: #fff;
		line-height: 9px;
	}

	.zoom input {
		appearance: none;
		width: 66px;
		height: 10px;
		margin: 0;
		background: linear-gradient(#8c9199, #8c9199) center / 100% 1px no-repeat;
	}

	.zoom input::-webkit-slider-thumb {
		appearance: none;
		width: 6px;
		height: 9px;
		border: 1px solid #6d727a;
		border-radius: 0 0 3px 3px;
		background: #fff;
	}

	/* taskbar */

	.taskbar {
		display: flex;
		flex: none;
		height: 21px;
		background: linear-gradient(#3b80ee, #2459d6 20%, #245edb 80%, #1a45ae);
		font-family: 'DejaVu Sans Condensed', 'DejaVu Sans', sans-serif;
		color: #fff;
	}

	.start {
		display: flex;
		flex: none;
		align-items: center;
		gap: 4px;
		width: 78px;
		padding-left: 7px;
		border-radius: 0 8px 8px 0;
		background: linear-gradient(#5eb05a, #3a963a 25%, #328a32 75%, #226b22);
		font: italic 700 12px 'Open Sans', sans-serif;
		text-shadow: 1px 1px 1px #1c4a1c;
	}

	.start svg {
		width: 14px;
		height: 14px;
	}

	.launch {
		display: flex;
		flex: none;
		align-items: center;
		gap: 5px;
		width: 133px;
		padding: 0 5px 0 9px;
	}

	.launch .ico {
		width: 11px;
		height: 11px;
	}

	.more {
		align-self: flex-start;
		margin-left: auto;
		padding-top: 2px;
	}

	.tasks {
		display: flex;
		flex: 1;
		gap: 2px;
		min-width: 0;
		padding: 2px 9px 1px 0;
	}

	.task {
		display: flex;
		flex: 1;
		align-items: center;
		gap: 2px;
		min-width: 0;
		padding-left: 6px;
		border-radius: 2px;
		background: linear-gradient(#5a97f6, #3c7df0 20%, #3a78ea);
		overflow: hidden;
	}

	.active {
		background: #1e4fb4;
		box-shadow: inset 1px 1px 1px #143a8c;
	}

	.tray {
		display: flex;
		flex: none;
		align-items: center;
		width: 55px;
		padding-right: 9px;
		background: linear-gradient(#2fb3f3, #1290e8 25%, #1290e8 80%, #0d6cc0);
	}

	.tray time {
		margin-left: auto;
	}

	/* browser window over the document */

	.dialog {
		position: absolute;
		top: 125px;
		left: 142px;
		display: flex;
		flex-direction: column;
		width: 73%;
		height: 415px;
		border: 3px solid #0a35d6;
		border-top: 0;
		border-radius: 5px 5px 0 0;
		background: #fff;
		box-shadow: inset 0 0 0 1px #4d7df0;
		font-family: 'Liberation Sans', Arial, sans-serif;
		font-size: 9px;
		line-height: 12px;
		overflow: hidden;
	}

	.dialog-title {
		display: flex;
		flex: none;
		align-items: center;
		gap: 2px;
		height: 22px;
		padding: 1px 1px 0 2px;
		margin: 0 -1px;
		background: linear-gradient(#0a4fd8, #2b80ff 8%, #0055e5 20%, #0058ee 60%, #0666ff 85%, #0040c0);
		color: #fff;
	}

	.dialog-title strong {
		flex: 1;
		margin-left: 1px;
		font-family: 'Open Sans', sans-serif;
		white-space: nowrap;
	}

	.dialog-title button {
		display: grid;
		place-items: center;
		width: 16px;
		height: 16px;
		border: 1px solid #dce8ff;
		border-radius: 2px;
		background: linear-gradient(135deg, #6d9bf7, #2257d8);
	}

	.dialog-title button svg {
		width: 11px;
		height: 11px;
	}

	.dialog-title .close {
		background: linear-gradient(135deg, #f0917a, #cf3a14);
	}

	.dialog-body {
		display: flex;
		flex: 1;
		min-height: 0;
	}

	form {
		flex: 1;
		min-width: 0;
		padding-left: 1px;
		overflow: hidden;
	}

	h3 {
		height: 20px;
		margin: 0;
		padding: 1px 0 0 16px;
		border-bottom: 1px solid #b8b8b8;
		font-size: 10px;
		font-style: italic;
		color: #3b5f88;
	}

	.actions {
		display: flex;
		gap: 5px;
		height: 25px;
		margin-top: 5px;
		padding: 3px 0 0 19px;
		background: #edf7f0;
	}

	.actions svg {
		width: 18px;
		height: 18px;
	}

	.fields {
		display: flex;
		flex-direction: column;
		gap: 3px;
		padding: 3px 2px 0;
	}

	.row {
		display: flex;
		align-items: center;
		height: 23px;
	}

	.row label {
		width: 89px;
		padding-left: 2px;
		white-space: nowrap;
		color: #47717a;
	}

	.row input {
		width: 198px;
		height: 23px;
		padding: 0 1px;
		border: 1px solid #8d8d8d;
		background: #fff;
		color: #3d2445;
	}

	.row input:disabled {
		color: #b0b0a8;
	}

	.row .long {
		width: 392px;
	}

	.near label {
		width: 84px;
		padding-left: 3px;
	}

	.select {
		display: flex;
		align-items: center;
		width: 151px;
		height: 16px;
		padding-right: 1px;
		border: 1px solid #8fa9cb;
		background: #fff;
	}

	.select select {
		appearance: none;
		flex: 1;
		min-width: 0;
		height: 14px;
		padding: 0 3px;
		border: 0;
		background: none;
		color: #3d2445;
	}

	.chev {
		width: 12px;
		height: 13px;
		padding: 2px;
		border-radius: 1px;
		background: linear-gradient(135deg, #d5e2fd, #aac4f5);
	}

	.kind,
	.road,
	.state,
	.city {
		height: 16px;
	}

	.kind {
		margin-bottom: 18px;
	}

	.kind label {
		width: 98px;
		padding-left: 0;
	}

	.kind .select {
		width: 106px;
	}

	.zip input {
		width: 66px;
	}

	.zip svg {
		width: 20px;
		height: 20px;
		margin-left: 5px;
	}

	.road .select {
		width: 234px;
	}

	.road {
		margin-bottom: 3px;
	}

	.state,
	.city {
		margin-bottom: 2px;
	}

	.city .select {
		width: 157px;
	}

	.first {
		margin-top: 17px;
	}

	.phone,
	.phone input {
		height: 22px;
	}

	.phone label {
		width: 32px;
		padding: 0;
	}

	.photo {
		display: flex;
		gap: 6px;
		padding: 5px 0 0 37px;
	}

	.photo label {
		display: flex;
		align-items: center;
		gap: 3px;
		color: #3d2445;
	}

	.photo input {
		appearance: none;
		width: 10px;
		height: 10px;
		margin: 0;
		border: 1px solid #3f6284;
		border-radius: 50%;
		background: #fff;
	}

	.photo input:checked {
		background: radial-gradient(#2ba52b 2px, #fff 3px);
	}

	.bar {
		display: flex;
		flex-direction: column;
		align-items: center;
		width: 14px;
		padding: 1px 1px 2px;
		background: #f6f5f0;
	}

	.end .chev {
		width: 11px;
		height: 11px;
	}

	.flip {
		transform: rotate(180deg);
	}

	.grip {
		width: 11px;
		height: 270px;
		margin: 1px 0 auto;
		border: 1px solid #9db8ee;
		border-radius: 1px;
		background: linear-gradient(90deg, #cbdafd, #b9cdfb);
	}
</style>
